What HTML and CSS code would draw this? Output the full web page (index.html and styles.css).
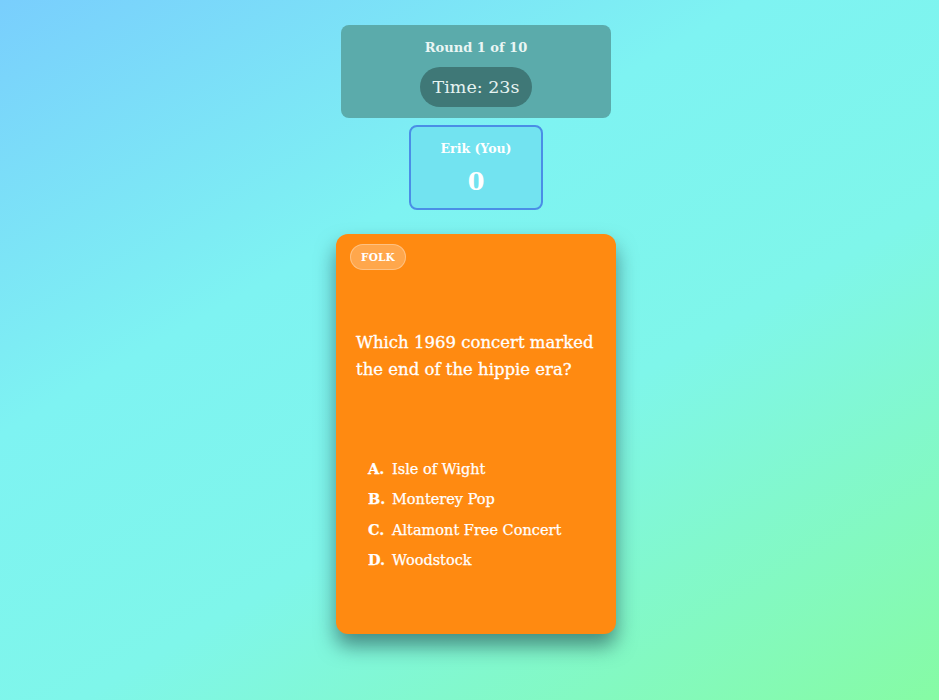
FILE: index.html
```html
<!DOCTYPE html>
<html lang="en">
<head>
<meta charset="utf-8">
<title>Music Trivia</title>
<link rel="stylesheet" href="styles.css">
</head>
<body>
<main class="game">
  <section class="round-box">
    <div class="round-label">Round 1 of 10</div>
    <div class="timer">Time: 23s</div>
  </section>
  <section class="players">
    <div class="player player-you">
      <div class="player-name">Erik (You)</div>
      <div class="player-score">0</div>
    </div>
  </section>
  <article class="question-card">
    <span class="genre">FOLK</span>
    <h2 class="question">Which 1969 concert marked the end of the hippie era?</h2>
    <ol class="options">
      <li class="option"><span class="letter">A.</span><span class="answer">Isle of Wight</span></li>
      <li class="option"><span class="letter">B.</span><span class="answer">Monterey Pop</span></li>
      <li class="option"><span class="letter">C.</span><span class="answer">Altamont Free Concert</span></li>
      <li class="option"><span class="letter">D.</span><span class="answer">Woodstock</span></li>
    </ol>
  </article>
</main>
</body>
</html>
```
FILE: styles.css
```css
* { box-sizing: border-box; }
html, body { height: 100%; }
body {
  margin: 0;
  font-family: "DejaVu Serif", "Liberation Serif", serif;
  background: linear-gradient(150deg, #79cefd 0%, #7ef3f2 35%, #7ff6ea 60%, #86fba4 100%);
  color: #fff;
}
.game {
  display: flex;
  flex-direction: column;
  align-items: center;
  padding-top: 25px;
  padding-left: 13px;
}
.round-box {
  width: 270px;
  height: 93px;
  background: #5babab;
  border-radius: 8px;
  display: flex;
  flex-direction: column;
  align-items: center;
  padding-top: 13px;
}
.round-label {
  font-size: 13px;
  font-weight: bold;
  color: #eaf6f4;
  line-height: 20px;
}
.timer {
  margin-top: 9px;
  height: 40px;
  padding: 0 13px;
  border-radius: 20px;
  background: #3f7877;
  color: #e6f3f1;
  font-size: 17.5px;
  line-height: 40px;
}
.players {
  margin-top: 7px;
  display: flex;
  justify-content: center;
}
.player {
  width: 134px;
  height: 85px;
  border: 2px solid #4a8ee6;
  border-radius: 8px;
  background: #72e3f0;
  display: flex;
  flex-direction: column;
  align-items: center;
  padding-top: 12px;
}
.player-name {
  font-size: 12.5px;
  font-weight: bold;
  line-height: 20px;
}
.player-score {
  margin-top: 9px;
  font-size: 24px;
  font-weight: bold;
  line-height: 28px;
}
.question-card {
  margin-top: 24px;
  width: 280px;
  height: 400px;
  background: #ff8a11;
  border-radius: 12px;
  box-shadow: 0 12px 20px rgba(30, 70, 75, 0.6);
  padding: 10px 14px 0 14px;
  display: flex;
  flex-direction: column;
  align-items: flex-start;
}
.genre {
  height: 26px;
  padding: 0 10px;
  border-radius: 13px;
  background: rgba(255, 255, 255, 0.25);
  border: 1px solid rgba(255, 255, 255, 0.3);
  font-size: 10.5px;
  font-weight: bold;
  line-height: 24px;
  letter-spacing: 0.2px;
}
.question {
  margin: 59px 0 0 6px;
  font-size: 16.5px;
  font-weight: 500;
  line-height: 27px;
  width: 250px;
  -webkit-text-stroke: 0.3px #fff;
}
.options {
  list-style: none;
  margin: 76px 0 0 18px;
  padding: 0;
}
.option {
  display: flex;
  font-size: 14.5px;
  line-height: 20px;
  margin-bottom: 10.3px;
  -webkit-text-stroke: 0.25px #fff;
}
.letter {
  font-weight: bold;
  width: 24px;
}
```
